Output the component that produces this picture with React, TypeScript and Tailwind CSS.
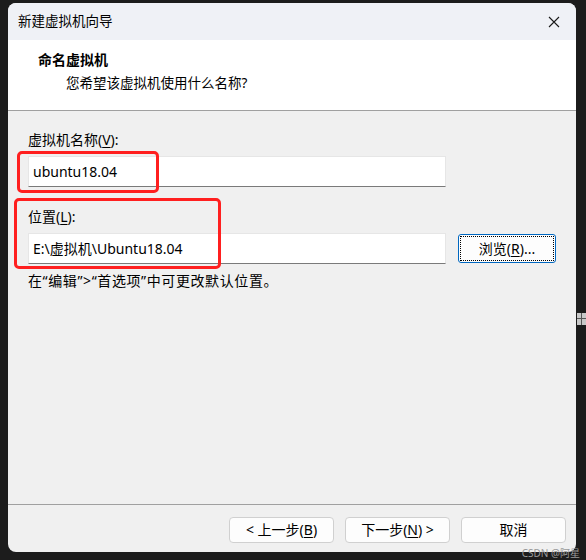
const font = "font-['Segoe_UI','Noto_Sans','Noto_Sans_CJK_SC',sans-serif]";

const WizardButton = ({ children }: { children: React.ReactNode }) => (
  <button className="w-[105px] h-[26px] rounded-[4px] border border-[#d0d0d0] bg-[#fdfdfd] text-[14px] text-black leading-none flex items-center justify-center">
    {children}
  </button>
);

const App = () => {
  return (
    <div className={`w-[586px] h-[560px] bg-[#1c1c1c] relative overflow-hidden ${font}`}>
      <div className="absolute left-[8px] top-[3px] w-[568px] h-[549px] rounded-[8px] overflow-hidden bg-[#f0f0f0] flex flex-col">
        {/* title bar */}
        <div className="h-[37px] bg-[#eff1f6] flex items-center pl-[10px] pr-[16px]">
          <span className="text-[13.5px] text-black">新建虚拟机向导</span>
          <svg className="ml-auto" width="12" height="12" viewBox="0 0 12 12">
            <path d="M1 1 L11 11 M11 1 L1 11" stroke="#1a1a1a" strokeWidth="1.1" />
          </svg>
        </div>
        {/* header */}
        <div className="h-[71px] bg-white border-b border-[#a0a0a0] pl-[30px] pt-[10px]">
          <div className="text-[14px] font-bold text-black leading-[20px]">命名虚拟机</div>
          <div className="text-[13.5px] text-black leading-[20px] mt-[3px] pl-[28px]">
            您希望该虚拟机使用什么名称?
          </div>
        </div>
        {/* body */}
        <div className="flex-1 relative px-[20px] pt-[19px]">
          <div className="text-[14px] text-black leading-[20px]">
            虚拟机名称(<span className="underline underline-offset-2">V</span>):
          </div>
          <div className="mt-[6px] w-[418px] h-[31px] bg-white border border-[#e6e6e6] border-b-[#7a7a7a] flex items-center pl-[4px] text-[14px] text-black">
            ubuntu18.04
          </div>
          <div className="mt-[20px] text-[14px] text-black leading-[20px]">
            位置(<span className="underline underline-offset-2">L</span>):
          </div>
          <div className="mt-[6px] flex items-center">
            <div className="w-[418px] h-[31px] bg-white border border-[#e6e6e6] border-b-[#7a7a7a] flex items-center pl-[4px] text-[14px] text-black">
              E:\虚拟机\Ubuntu18.04
            </div>
            <div className="ml-[12px] w-[98px] h-[29px] rounded-[3px] border border-[#0067c0] bg-[#fdfdfd] p-[1px]">
              <div className="w-full h-full border border-dotted border-black flex items-center justify-center text-[14px] text-black">
                浏览(<span className="underline underline-offset-2">R</span>)...
              </div>
            </div>
          </div>
          <div className="mt-[7px] text-[14px] tracking-[0.6px] text-black leading-[20px]">
            在“编辑”&gt;“首选项”中可更改默认位置。
          </div>
          {/* red highlight boxes */}
          <div className="absolute left-[9px] top-[40px] w-[142px] h-[42px] border-[3px] border-[#ff1f1f] rounded-[5px]" />
          <div className="absolute left-[6px] top-[87px] w-[207px] h-[71px] border-[3px] border-[#ff1f1f] rounded-[5px]" />
        </div>
        {/* footer */}
        <div className="h-[48px] border-t border-[#a0a0a0] flex items-start justify-end gap-[11px] pt-[12px] pr-[10px]">
          <WizardButton>
            &lt; 上一步(<span className="underline underline-offset-2">B</span>)
          </WizardButton>
          <WizardButton>
            下一步(<span className="underline underline-offset-2">N</span>) &gt;
          </WizardButton>
          <WizardButton>取消</WizardButton>
        </div>
      </div>
      {/* right edge glyph */}
      <div className="absolute left-[577px] top-[313px] w-[9px] h-[12px] bg-[#c8c8c8] flex">
        <div className="w-[1px] h-full bg-[#555] ml-[4px]" />
      </div>
      <div className="absolute left-[577px] top-[318px] w-[9px] h-[1px] bg-[#555]" />
      <div className="absolute right-[6px] bottom-[2px] text-[10px] text-[#9a9a9a] leading-none">
        CSDN @阿星
      </div>
    </div>
  );
};

export default App;
